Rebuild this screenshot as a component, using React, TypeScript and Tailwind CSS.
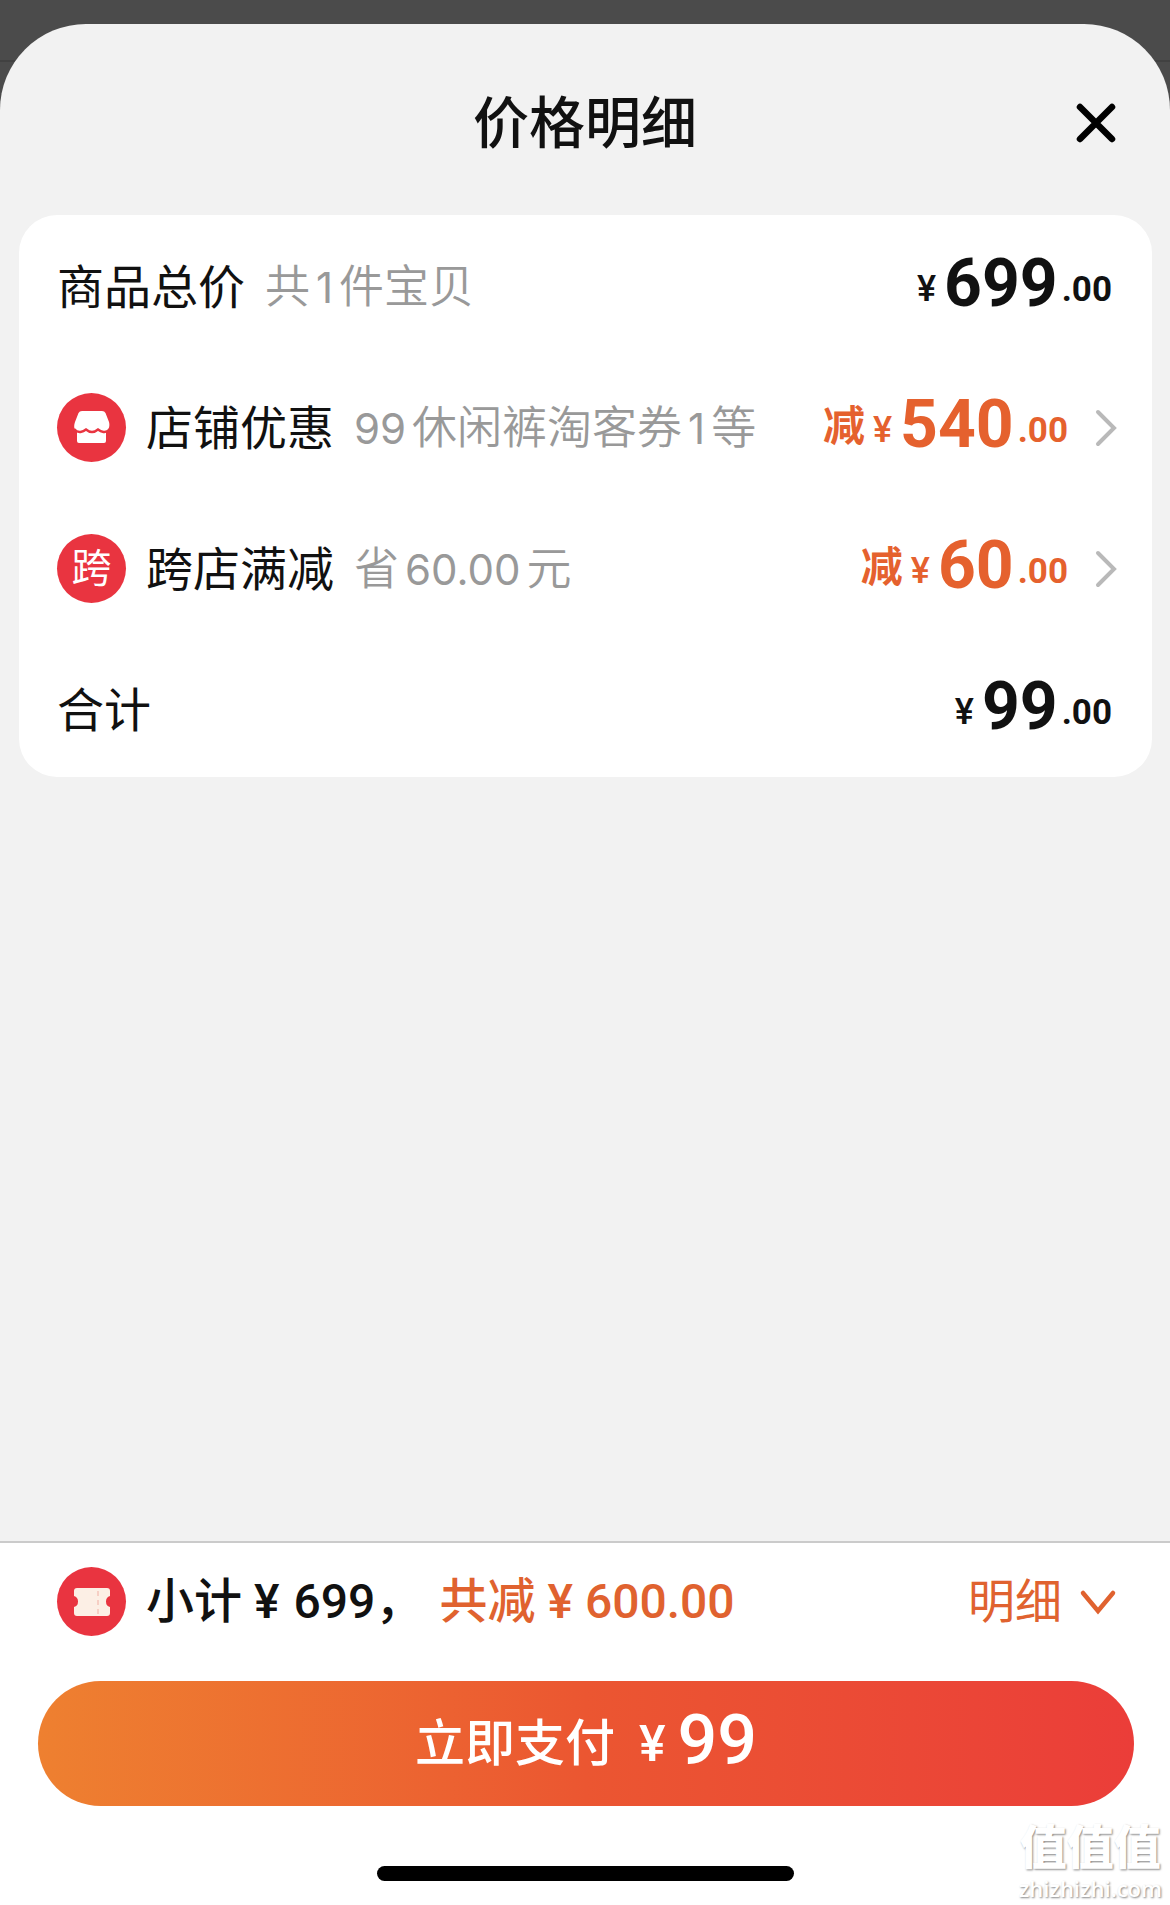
import type { ReactNode } from 'react'
import clsx from 'clsx'

type Line = {
  label: string
  note?: string[]
  icon?: ReactNode
  amount: string
  cents: string
  discount?: boolean
}

const lines: Line[] = [
  { label: '商品总价', note: ['共', '1', '件宝贝'], amount: '699', cents: '.00' },
  { label: '店铺优惠', note: ['99', '休闲裤淘客券', '1', '等'], icon: <ShopIcon />, amount: '540', cents: '.00', discount: true },
  {
    label: '跨店满减',
    note: ['省', '60.00', '元'],
    icon: <span className="text-[40px] leading-none text-white">跨</span>,
    amount: '60',
    cents: '.00',
    discount: true,
  },
  { label: '合计', amount: '99', cents: '.00' },
]

export default function App() {
  return (
    <div className="relative flex min-h-screen flex-col bg-[#4b4b4b] pt-6 font-['Inter','Noto_Sans_CJK_SC',sans-serif] text-[#111]">
      {/* edge of the dimmed page behind the sheet */}
      <div className="absolute inset-x-0 top-[60px] h-0.5 bg-[#414141]" />

      <section className="relative flex flex-1 flex-col overflow-hidden rounded-t-[86px] bg-[#f2f2f2]">
        <header className="grid h-[191px] grid-cols-[1fr_auto_1fr] items-center px-[53px] pt-1.5">
          <h1 className="col-start-2 text-[56px] leading-none font-medium">价格明细</h1>
          <button type="button" aria-label="关闭" className="justify-self-end">
            <svg width="42" height="42" viewBox="0 0 42 42" fill="none" stroke="#000" strokeWidth="6.5" strokeLinecap="round">
              <path d="M5 5l32 32M37 5L5 37" />
            </svg>
          </button>
        </header>

        <div className="mr-[18px] ml-[19px] flex flex-col gap-[71px] rounded-[38px] bg-white pt-9 pr-10 pb-[33px] pl-[38px]">
          {lines.map(line => (
            <PriceLine key={line.label} line={line} />
          ))}
        </div>
      </section>

      <Footer />
      <Watermark />
    </div>
  )
}

function PriceLine({ line }: { line: Line }) {
  const content = (
    <>
      {line.icon && <Badge>{line.icon}</Badge>}
      <span className="text-[47px] leading-none">{line.label}</span>
      {line.note && (
        <span className="ml-5 flex items-baseline gap-1.5 text-[45px] leading-none font-[350] text-[#999]">
          {line.note.map(part => (
            <span key={part} className={clsx(/^\d/.test(part) && 'text-[42px] font-normal')}>{part}</span>
          ))}
        </span>
      )}
      <Price line={line} />
      {line.discount && (
        <svg className="ml-[26px]" width="24" height="40" viewBox="0 0 24 40" fill="none" stroke="#b9b9b9" strokeWidth="4" strokeLinecap="round">
          <path d="M4 5l16 16L4 37" />
        </svg>
      )}
    </>
  )

  if (line.discount) {
    return (
      <button type="button" className="-mr-1.5 flex h-[70px] items-center text-left whitespace-nowrap">
        {content}
      </button>
    )
  }
  return <div className="flex h-[70px] items-center whitespace-nowrap">{content}</div>
}

function Price({ line }: { line: Line }) {
  return (
    <span
      className={clsx(
        "ml-auto flex items-end pb-1 font-['Roboto','Noto_Sans_CJK_SC',sans-serif] leading-none",
        line.discount && 'text-[#e5612e]',
      )}
    >
      {line.discount && <span className="mr-2 mb-2.5 text-[42px] font-bold">减</span>}
      <span className="mr-2 mb-2.5 text-[36px] font-medium">¥</span>
      <span className="text-[66px] font-bold">{line.amount}</span>
      <span className="mb-2.5 ml-1 text-[35px] font-bold">{line.cents}</span>
    </span>
  )
}

function Footer() {
  return (
    <footer className="relative flex flex-col border-t-2 border-[#cbcbcb] bg-white pt-6 pb-6">
      <div className="flex items-center pr-[52px] pl-[57px] font-['Roboto','Noto_Sans_CJK_SC',sans-serif] text-[48px] leading-none font-medium whitespace-nowrap">
        <Badge>
          <TicketIcon />
        </Badge>
        <span>小计</span>
        <span className="ml-3">¥</span>
        <span className="ml-3.5">699，</span>
        <span className="ml-4 text-[#e0622f]">共减</span>
        <span className="ml-3 text-[#e0622f]">¥</span>
        <span className="ml-3 text-[#e0622f]">600.00</span>
        <button type="button" className="ml-auto flex items-center gap-4 text-[47px] font-normal text-[#e0622f]">
          明细
          <svg width="40" height="28" viewBox="0 0 40 28" fill="none" stroke="currentColor" strokeWidth="4.5" strokeLinecap="round">
            <path d="M5 5l15 18L35 5" />
          </svg>
        </button>
      </div>

      <button
        type="button"
        className="mr-9 ml-[38px] mt-[45px] flex h-[125px] items-center justify-center rounded-full bg-linear-to-r from-[#ee8030] via-[#eb5631] via-50% to-[#eb3d39] font-['Roboto','Noto_Sans_CJK_SC',sans-serif] leading-none font-medium text-white"
      >
        <span className="text-[50px]">立即支付</span>
        <span className="ml-6 text-[50px]">¥</span>
        <span className="ml-3 pb-2 text-[70px]">99</span>
      </button>

      <div className="mx-auto mt-[60px] h-[15px] w-[417px] rounded-full bg-black" />
    </footer>
  )
}

function Watermark() {
  return (
    <div className="absolute right-2 bottom-[3px] text-center text-white text-shadow-[1px_1px_2px_#888]">
      <div className="text-[47px] leading-[55px] font-black">值值值</div>
      <div className="font-['Open_Sans',sans-serif] text-[22px] leading-7 font-semibold">zhizhizhi.com</div>
    </div>
  )
}

function Badge({ children }: { children: ReactNode }) {
  return (
    <span className="mr-5 flex size-[69px] shrink-0 items-center justify-center rounded-full bg-[#e93440]">{children}</span>
  )
}

function ShopIcon() {
  return (
    <svg width="36" height="34" viewBox="0 0 36 34">
      <path d="M8 1h20q2.500 0 3.500 2l3.500 9c1 4 0 8-3 9v10q0 2-2 2H5q-2 0-2-2V21C0 20-.500 16 1 12l3.500-9Q5.500 1 8 1z" fill="#fff" />
      <path d="M0 19q3 3.500 6.500 3 3-.500 5.500-2.500 3 2.500 6 2.500t6-2.500q2.500 2 5.500 2.500 3.500.500 6.500-3" fill="none" stroke="#e93440" strokeWidth="2.5" />
    </svg>
  )
}

function TicketIcon() {
  return (
    <svg width="38" height="30" viewBox="0 0 38 30" fill="#fcefe5">
      <path d="M4 1h30q3 0 3 3v5q-4 1-4 5.500t4 5.500v6q0 3-3 3H4q-3 0-3-3v-6q4-1 4-5.500T1 9V4q0-3 3-3z" />
      <path d="M25 4v23" stroke="#f6cfc4" strokeWidth="2" strokeDasharray="5 4" />
    </svg>
  )
}
